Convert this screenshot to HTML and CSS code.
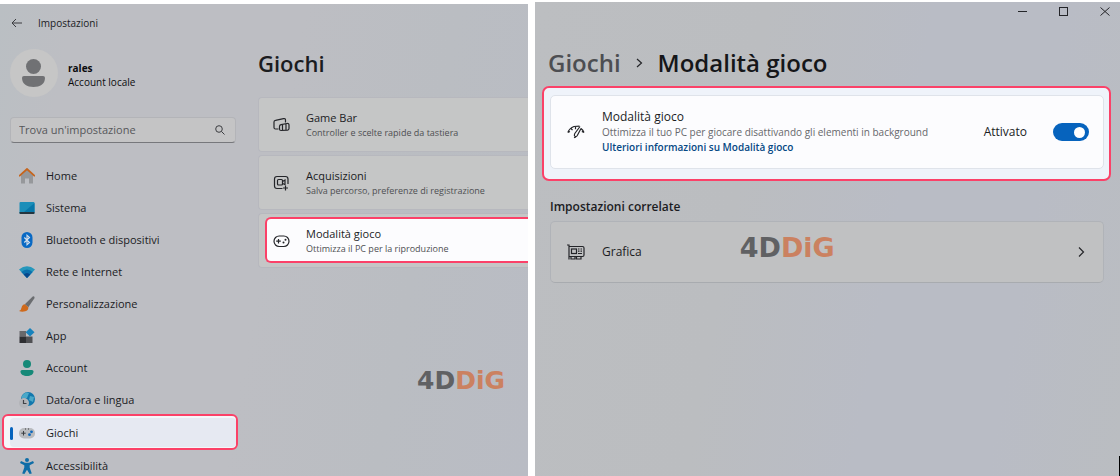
FILE: index.html
```html
<!DOCTYPE html>
<html lang="it">
<head>
    <meta charset="UTF-8">
    <meta name="viewport" content="width=device-width, initial-scale=1.0">
    <title>Impostazioni</title>
    <link rel="stylesheet" href="styles.css">
</head>
<body>
    <!-- Finestra con l'elenco delle impostazioni -->
    <div class="window window-list">
        <aside class="sidebar">
            <div class="topbar">
                <button type="button" class="back" aria-label="Indietro">
                    <svg width="12" height="10" viewBox="0 0 12 10"><path d="M11 5H1M5 1L1 5l4 4" /></svg>
                </button>
                <span>Impostazioni</span>
            </div>

            <div class="user">
                <svg class="avatar" width="48" height="48" viewBox="0 0 48 48">
                    <circle cx="24" cy="24" r="24" fill="#c6c6c6" />
                    <circle cx="23.500" cy="17.500" r="7.500" fill="#707174" />
                    <path d="M14 27h19q2 0 2 2c0 6-5 9-11.500 9S12 35 12 29q0-2 2-2z" fill="#707174" />
                </svg>
                <div>
                    <strong>rales</strong>
                    <p>Account locale</p>
                </div>
            </div>

            <form class="search">
                <input type="search" aria-label="Trova un'impostazione" placeholder="Trova un'impostazione">
                <button type="button" aria-label="Cerca">
                    <svg width="10" height="10" viewBox="0 0 10 10"><circle cx="4" cy="4" r="3.300" /><path d="M6.500 6.500L9.500 9.500" /></svg>
                </button>
            </form>

            <nav class="menu">
                <a href="#home">
                    <svg width="16" height="16" viewBox="0 0 16 16"><path d="M2 7l6-6 6 6v8.500H10v-5H6v5H2z" fill="#96989b" /><path d="M.7 7.700L8 1l7.300 6.700" fill="none" stroke="#c6651d" stroke-width="1.800" stroke-linecap="round" /></svg>
                    Home
                </a>
                <a href="#sistema">
                    <svg width="16" height="16" viewBox="0 0 16 16"><rect x=".5" y="2" width="15" height="12" rx="1" fill="#1b8eb9" /><path d="M15.500 3v9H5z" fill="#0877a9" /><path d="M.5 12h15v1q0 1-1 1h-13q-1 0-1-1z" fill="#25353f" /></svg>
                    Sistema
                </a>
                <a href="#bluetooth">
                    <svg width="16" height="16" viewBox="0 0 16 16"><rect x="2.500" width="11" height="16" rx="5.500" fill="#0969c4" /><path d="M5.300 5.500l5.200 5L8 12.800V3.200l2.500 2.300-5.200 5" fill="none" stroke="#d8e1ec" stroke-width="1.100" /></svg>
                    Bluetooth e dispositivi
                </a>
                <a href="#rete">
                    <svg width="16" height="16" viewBox="0 0 16 16"><path d="M0 5.500Q8-1 16 5.500L8 14z" fill="#2597bc" /><path d="M2.300 8Q8 3 13.700 8L8 14z" fill="#0b70ad" /><path d="M4.700 10.500Q8 7.500 11.300 10.500L8 14z" fill="#07478c" /></svg>
                    Rete e Internet
                </a>
                <a href="#personalizzazione">
                    <svg width="16" height="16" viewBox="0 0 16 16"><path d="M14 .3q2.200.2 1.300 2.200L9.300 11.300 5.800 8.300z" fill="#6b6d70" /><path d="M5.800 8.300l3.500 3q.3 3-3 4-3.500.8-6.300-.3 2.200-.7 2.500-3.200Q3.300 8.300 5.800 8.300z" fill="#cf6a1c" /></svg>
                    Personalizzazione
                </a>
                <a href="#app">
                    <svg width="16" height="16" viewBox="0 0 16 16"><path d="M.5 3H7v5.500H.5z" fill="#68696c" /><path d="M.5 8.500H7V15H.5z" fill="#2e2f32" /><path d="M7 8.500h6.500V15H7z" fill="#505154" /><path d="M11 0l4.500 4.200L11 8.500 6.700 4.200z" fill="#1782bc" /></svg>
                    App
                </a>
                <a href="#account">
                    <svg width="16" height="16" viewBox="0 0 16 16"><circle cx="8" cy="4" r="4" fill="#168978" /><path d="M3 10h10q1.500 0 1.500 1.500C14.500 14.500 11.500 16 8 16s-6.500-1.500-6.500-4.500Q1.500 10 3 10z" fill="#168978" /></svg>
                    Account
                </a>
                <a href="#data">
                    <svg width="16" height="16" viewBox="0 0 16 16"><circle cx="9" cy="7" r="7" fill="#1278ad" /><path d="M3 4q3-5 7-3L8 6H3zM11 4l4 1-1 5-4-2z" fill="#4aa8c8" /><circle cx="5" cy="11" r="5" fill="#b2b4b8" /><path d="M4.500 8v3.500H7.500" fill="none" stroke="#414347" stroke-width="1.200" /></svg>
                    Data/ora e lingua
                </a>
                <a href="#giochi" class="current" aria-current="page">
                    <span class="current-fill">
                        <svg width="16" height="16" viewBox="0 0 16 16"><rect y="3" width="16" height="10.500" rx="5" fill="#b9bbbf" /><path d="M4.500 6v4.500M2.300 8.200h4.400M6 4h1M9 4h1" fill="none" stroke="#3c3e42" stroke-width="1" /><circle cx="10.500" cy="9.700" r="1.400" fill="#0b68bd" /><circle cx="12.500" cy="6.800" r="1.400" fill="#0b68bd" /></svg>
                        Giochi
                    </span>
                </a>
                <a href="#accessibilita">
                    <svg width="16" height="16" viewBox="0 0 16 16"><circle cx="8" cy="2" r="2" fill="#0e6da7" /><path d="M2 3l4 1.700h4L14 3l1 1.900L10.700 7.300v2.200l2.100 6-2.200.5L8 11.700 5.400 16l-2.200-.5 2.100-6V7.300L1 4.900z" fill="#0e6da7" /></svg>
                    Accessibilità
                </a>
            </nav>
        </aside>

        <main class="games">
            <h1>Giochi</h1>
            <a href="#gamebar" class="card">
                <svg width="17" height="16" viewBox="0 0 17 16"><path d="M5.500 12H2.500Q1 12 1 10.500V5Q1 3.500 2.500 3.300L10.500 1.700Q12.500 1.300 12.500 3v2.500" /><path d="M6.500 9.500q0-1.500 1.500-1.800l6-1.200q2-.3 2 1.500v3.500q0 1.500-1.500 1.700L8 13.500q-1.500 0-1.500-1.500zM9.500 7.500v6M13 7v6" /></svg>
                <span>Game Bar<small>Controller e scelte rapide da tastiera</small></span>
            </a>
            <a href="#acquisizioni" class="card">
                <svg width="17" height="16" viewBox="0 0 17 16"><path d="M9.500 13.500H4Q1.500 13.500 1.500 11V4Q1.500 1.500 4 1.500h8.500Q15 1.500 15 4v5M10 13h5M12.500 10.500v5" /><rect x="4.500" y="4.500" width="5" height="5.500" rx="1" /><path d="M9.500 6.500l2.500-1.500v4.500L9.500 8.500" /></svg>
                <span>Acquisizioni<small>Salva percorso, preferenze di registrazione</small></span>
            </a>
            <div class="card card-marked">
                <a href="#modalita" class="marked">
                    <svg width="17" height="16" viewBox="0 0 17 16"><rect x="1" y="3" width="15" height="10.500" rx="5.200" /><path d="M5.500 6v4.500M3.200 8.200h4.600" /><circle class="dot" cx="10.500" cy="9.500" r="1" /><circle class="dot" cx="12.500" cy="6.800" r="1" /></svg>
                    <span>Modalità gioco<small>Ottimizza il PC per la riproduzione</small></span>
                </a>
            </div>
            <div class="logo logo-list">4D<span>DiG</span></div>
        </main>
    </div>

    <!-- Finestra con il dettaglio della modalità gioco -->
    <div class="window window-detail">
        <div class="controls">
            <button type="button" aria-label="Riduci a icona"><svg width="10" height="10" viewBox="0 0 10 10"><path d="M0 5.500h9" /></svg></button>
            <button type="button" aria-label="Ingrandisci"><svg width="10" height="10" viewBox="0 0 10 10"><rect x=".5" y="1.500" width="8" height="8" /></svg></button>
            <button type="button" aria-label="Chiudi"><svg width="10" height="10" viewBox="0 0 10 10"><path d="M.5 1.500l9 8M9.500 1.500l-9 8" /></svg></button>
        </div>

        <h2 class="breadcrumb">
            <a href="#giochi">Giochi</a>
            <svg width="7" height="10" viewBox="0 0 7 10"><path d="M1 1l4.500 4L1 9" /></svg>
            <span>Modalità gioco</span>
        </h2>

        <div class="mode-outline">
            <div class="mode">
                <svg width="18" height="14" viewBox="0 0 18 14"><path d="M.8 7.500Q2.500 3 7 1.500L12.500 1.200M14 3.500Q16 5 17 7.500M.8 7.500l2.200-1M4 3.500l1.500 1.700M17 7.500l-2.200-1M8.500 1.500v2.700" /><path d="M13 1.500L7.800 8.500q-1 1.700 0 2.700 1.500 1 2.500-.7L14 3.500M7 12.800l2-.8" /></svg>
                <div class="mode-text">
                    <h3>Modalità gioco</h3>
                    <p>Ottimizza il tuo PC per giocare disattivando gli elementi in background</p>
                    <a href="#info">Ulteriori informazioni su Modalità gioco</a>
                </div>
                <label for="game-mode">Attivato</label>
                <input type="checkbox" role="switch" id="game-mode" class="switch" checked>
            </div>
        </div>

        <h3 class="related">Impostazioni correlate</h3>
        <a href="#grafica" class="graphics">
            <svg width="18" height="16" viewBox="0 0 18 16"><path d="M0 1h2v14.500M2 2.500h13.500q1.500 0 1.500 1.500v7q0 1.500-1.500 1.500H2" /><rect x="4.500" y="5" width="5" height="4.500" /><path d="M4 12.500V15h4v-2.500M9.500 12.500V15H14v-2.500M11 5h1.500M13.500 5H15M11 7.200h1.500M13.500 7.200H15M11 9.500h4" /></svg>
            <span>Grafica</span>
            <svg width="7" height="10" viewBox="0 0 7 10"><path d="M1 .5L5.500 5 1 9.500" /></svg>
        </a>
        <div class="logo logo-detail">4D<span>DiG</span></div>
        <div class="edge"></div>
    </div>
</body>
</html>
```

FILE: styles.css
```css
* {
    box-sizing: border-box;
}
body {
    margin: 0;
    height: 100vh;
    background: #fff;
    color: #1b1c1f;
    font-family: "Open Sans", "Noto Sans", sans-serif;
    font-size: 11px;
    line-height: 16px;
    display: grid;
    grid-template-columns: 528fr 585fr;
    gap: 7px;
    overflow: hidden;
}
h1, h2, h3, p {
    margin: 0;
}
a {
    color: inherit;
    text-decoration: none;
}
button {
    padding: 0;
    border: none;
    background: none;
    display: flex;
    cursor: pointer;
}
svg {
    flex: none;
    display: block;
}
.back svg, .search svg, .card svg, .controls svg, .breadcrumb svg, .mode svg, .graphics svg {
    fill: none;
    stroke: #242529;
    stroke-width: 1.2;
}
.back svg, .search svg {
    stroke: #3c3d41;
    stroke-width: 1;
}
.window {
    position: relative;
    overflow: hidden;
    min-width: 0;
}
.window-list {
    margin-top: 4px;
    background: linear-gradient(100deg, #babfc3 0%, #bdbec3 12%, #bdbec3 50%, #babdc2 75%, #b9bcc4 100%);
    display: flex;
}
.window-detail {
    margin-top: 2px;
    padding: 0 9px 0 7px;
    background: linear-gradient(100deg, #bcbec1 0%, #bbbdc0 35%, #b9bcc5 60%, #b9bcc5 80%, #babdc1 100%);
}

/* Barra laterale */
.sidebar {
    flex: none;
    width: 238px;
    padding: 11px 2px 0 10px;
}
.topbar {
    display: flex;
    align-items: center;
    gap: 15px;
    padding-left: 1px;
    font-size: 10px;
}
.user {
    display: flex;
    align-items: center;
    gap: 10px;
    margin: 18px 0 20px;
    font-size: 10px;
    line-height: 14px;
    color: #0c0c0e;
}
.user div {
    padding-top: 3px;
}
.search {
    display: flex;
    align-items: center;
    height: 26px;
    padding: 0 10px 0 8px;
    border: 1px solid #b3b4b8;
    border-bottom-color: #77787c;
    border-radius: 4px;
    background: #c4c4c5;
}
.search input {
    flex: 1;
    min-width: 0;
    padding: 0;
    border: none;
    outline: none;
    background: none;
    font: inherit;
}
.search input::placeholder {
    color: #56575a;
    opacity: 1;
}
.menu {
    margin: 17px 0 0 -8px;
}
.menu a {
    display: flex;
    align-items: center;
    gap: 11px;
    height: 32px;
    padding-left: 17px;
}
.menu .current {
    height: 36px;
    margin: -2px -2px 0 0;
    padding: 2px 0 1px 6px;
    border: 2px solid #fb4168;
    border-radius: 6px;
    background: #f5f6f9;
}
.current-fill {
    flex: 1;
    display: flex;
    align-items: center;
    gap: 11px;
    height: 29px;
    padding-top: 1px;
    border-radius: 4px;
    background: #e6e9f2;
}
.current-fill::before {
    content: '';
    width: 3px;
    height: 13px;
    margin-right: -5px;
    border-radius: 2px;
    background: #0663bd;
}

/* Elenco dei giochi */
.games {
    flex: 1;
    min-width: 0;
    padding: 42px 0 0 20px;
}
.games h1 {
    margin-bottom: 17px;
    font-size: 22px;
    font-weight: 600;
    line-height: 34px;
}
.card {
    display: flex;
    align-items: center;
    height: 55px;
    margin-bottom: 3px;
    padding-left: 14px;
    border: 1px solid #b7b8be;
    border-right: none;
    border-radius: 4px 0 0 4px;
    background: #c5c6c6;
    line-height: 15px;
}
.card svg {
    margin-right: 16px;
}
.card .dot {
    fill: #242529;
    stroke: none;
}
.card small {
    display: block;
    color: #4e4f52;
    font-size: 9px;
}
.card-marked {
    align-items: flex-start;
    padding: 3px 0 0 6px;
}
.marked {
    flex: 1;
    display: flex;
    align-items: center;
    height: 46px;
    padding: 2px 0 0 6px;
    border: 2px solid #fb4168;
    border-right: none;
    border-radius: 6px 0 0 6px;
    background: #fcfcfe;
}

/* Dettaglio */
.controls {
    display: flex;
    justify-content: flex-end;
    gap: 31px;
    height: 18px;
    padding: 4px 1px 0 0;
}
.controls svg {
    stroke-width: 1;
}
.breadcrumb {
    display: flex;
    align-items: center;
    gap: 15px;
    margin: 25px 0 5px 6px;
    font-size: 24px;
    font-weight: 600;
    line-height: 36px;
    color: #151619;
}
.breadcrumb a {
    color: #4d4e52;
}
.mode-outline {
    padding: 7px 5px 10px 6px;
    border: 2px solid #fb4168;
    border-radius: 7px;
    background: #eff3fa;
}
.mode {
    display: flex;
    align-items: center;
    height: 74px;
    padding: 0 14px 0 16px;
    border: 1px solid #dfe3ea;
    border-radius: 5px;
    background: #fcfcfe;
}
.mode-text {
    flex: 1;
    margin-left: 17px;
    font-size: 10px;
    line-height: 15px;
}
.mode-text h3 {
    font-size: 12px;
    font-weight: 400;
    line-height: 16px;
}
.mode-text p {
    color: #66676b;
}
.mode-text a {
    color: #064884;
    font-weight: 600;
}
.mode label {
    margin-right: 26px;
    font-size: 12px;
}
.switch {
    appearance: none;
    display: flex;
    align-items: center;
    justify-content: flex-end;
    width: 36px;
    height: 18px;
    margin: 0;
    padding: 0 4px;
    border-radius: 9px;
    background: #0663bd;
}
.switch::before {
    content: '';
    width: 11px;
    height: 11px;
    border-radius: 50%;
    background: #fff;
}
.switch:not(:checked) {
    justify-content: flex-start;
    background: #77787c;
}
.related {
    margin: 18px 8px 6px;
    font-size: 12px;
    font-weight: 600;
    line-height: 16px;
}
.graphics {
    display: flex;
    align-items: center;
    height: 62px;
    margin: 0 7px 0 8px;
    padding: 0 18px 0 16px;
    border: 1px solid #b0b3b8;
    border-bottom-color: #a8abaf;
    border-radius: 5px;
    background: #c0c1c2;
    font-size: 12px;
}
.graphics span {
    flex: 1;
    margin-left: 17px;
}

/* Logo sovrapposto alle finestre */
.logo {
    position: absolute;
    color: #606163;
    font-family: "DejaVu Sans", sans-serif;
    font-weight: 700;
    pointer-events: none;
}
.logo span {
    color: #cb8160;
}
.logo-list {
    right: 23px;
    bottom: 80px;
    font-size: 25px;
    line-height: 30px;
}
.logo-detail {
    left: 35%;
    top: 230px;
    font-size: 27px;
    line-height: 32px;
}
.edge {
    position: absolute;
    right: 0;
    bottom: 0;
    width: 1px;
    height: 20px;
    background: #000;
}
```
